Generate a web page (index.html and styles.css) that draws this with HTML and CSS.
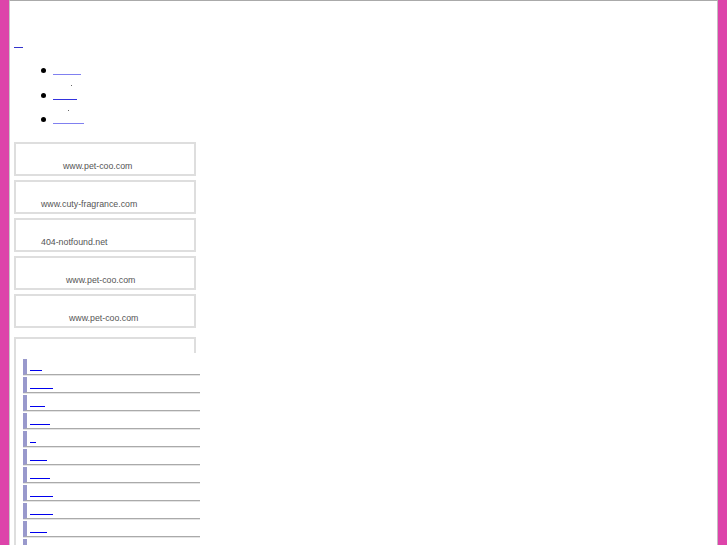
FILE: index.html
```html
<!DOCTYPE html>
<html lang="ja">
<head>
<meta charset="utf-8">
<title>page</title>
<link rel="stylesheet" href="styles.css">
</head>
<body>
<div class="page">
  <div class="header"></div>
  <a class="home" href="#" aria-label="home"></a>
  <ul class="nav">
    <li><div class="item"><a class="nl light w28" href="#"></a><span class="dot d18"></span></div></li>
    <li><div class="item"><a class="nl dark w24" href="#"></a><span class="dot d15"></span></div></li>
    <li><div class="item"><a class="nl light w31" href="#"></a></div></li>
  </ul>
  <div class="boxes">
    <div class="box p47">www.pet-coo.com</div>
    <div class="box p25">www.cuty-fragrance.com</div>
    <div class="box p25">404-notfound.net</div>
    <div class="box p50">www.pet-coo.com</div>
    <div class="box p53">www.pet-coo.com</div>
  </div>
  <div class="side">
    <div class="side-top"></div>
    <ul class="links">
      <li><a class="dark" href="#" style="width:12px"></a></li>
      <li><a class="dark" href="#" style="width:23px"></a></li>
      <li><a class="dark" href="#" style="width:15px"></a></li>
      <li><a class="dark" href="#" style="width:20px"></a></li>
      <li><a class="mid" href="#" style="width:6px"></a></li>
      <li><a class="light" href="#" style="width:17px"></a></li>
      <li><a class="dark" href="#" style="width:20px"></a></li>
      <li><a class="dark" href="#" style="width:23px"></a></li>
      <li><a class="dark" href="#" style="width:23px"></a></li>
      <li><a class="dark" href="#" style="width:17px"></a></li>
      <li><a class="dark" href="#" style="width:20px"></a></li>
    </ul>
  </div>
</div>
</body>
</html>
```
FILE: styles.css
```css
html, body {
  margin: 0;
  padding: 0;
  height: 100%;
  overflow: hidden;
}
body {
  background: #dd44aa;
  padding: 0 9px;
  font-family: "Liberation Sans", Arial, sans-serif;
}
.page {
  background: #fff;
  border-top: 1px solid #aaa;
  border-left: 1px solid #c8c8c8;
  border-right: 1px solid #c0c0c0;
  height: 100%;
  box-sizing: border-box;
  padding-left: 4px;
  overflow: hidden;
}
.header {
  height: 46px;
}
.home {
  display: block;
  width: 9px;
  height: 0;
  border-bottom: 1px solid #3333cc;
}
.nav {
  list-style: none;
  margin: 18px 0 0 27px;
  padding: 0;
}
.nav li {
  display: flex;
  height: 24.5px;
}
.nav li::before {
  content: "";
  width: 5px;
  height: 5px;
  border-radius: 50%;
  background: #000;
  margin: 2px 7px 0 0;
  flex: none;
}
.nl {
  display: block;
  height: 8px;
  border-bottom: 1px solid;
}
.w28 { width: 28px; }
.w24 { width: 24px; }
.w31 { width: 31px; }
.dark { border-bottom-color: #3333dd; }
.light { border-bottom-color: #8080f0; }
.mid { border-bottom-color: #5a5ae6; }
.dot {
  display: block;
  width: 1px;
  height: 1px;
  background: #666;
  margin-top: 10px;
}
.d18 { margin-left: 18px; }
.d15 { margin-left: 15px; }
.boxes {
  display: flex;
  flex-direction: column;
  gap: 4px;
  margin-top: 2.5px;
  width: 182px;
}
.box {
  height: 34px;
  box-sizing: border-box;
  border: 2px solid #dedede;
  padding-top: 17px;
  font-size: 8.8px;
  line-height: 11px;
  color: #555;
  white-space: nowrap;
}
.p47 { padding-left: 47px; }
.p25 { padding-left: 25px; }
.p50 { padding-left: 50px; }
.p53 { padding-left: 53px; }
.side {
  margin-top: 9px;
  width: 182px;
  box-sizing: border-box;
  border-left: 2px solid #dedede;
  height: 300px;
}
.side-top {
  height: 16px;
  box-sizing: border-box;
  border-top: 2px solid #dedede;
  border-right: 2px solid #dedede;
}
.links {
  list-style: none;
  margin: 6px 0 0 7px;
  padding: 0;
  width: 177px;
}
.links li {
  display: flex;
  height: 15px;
  border-left: 4px solid #9999cc;
  border-bottom: 1px solid #aaa;
  box-shadow: 0 1px 0 #e4e4e4;
  margin-bottom: 2px;
}
.links a {
  display: block;
  height: 11px;
  margin-left: 3px;
  border-bottom: 1px solid;
}
```
